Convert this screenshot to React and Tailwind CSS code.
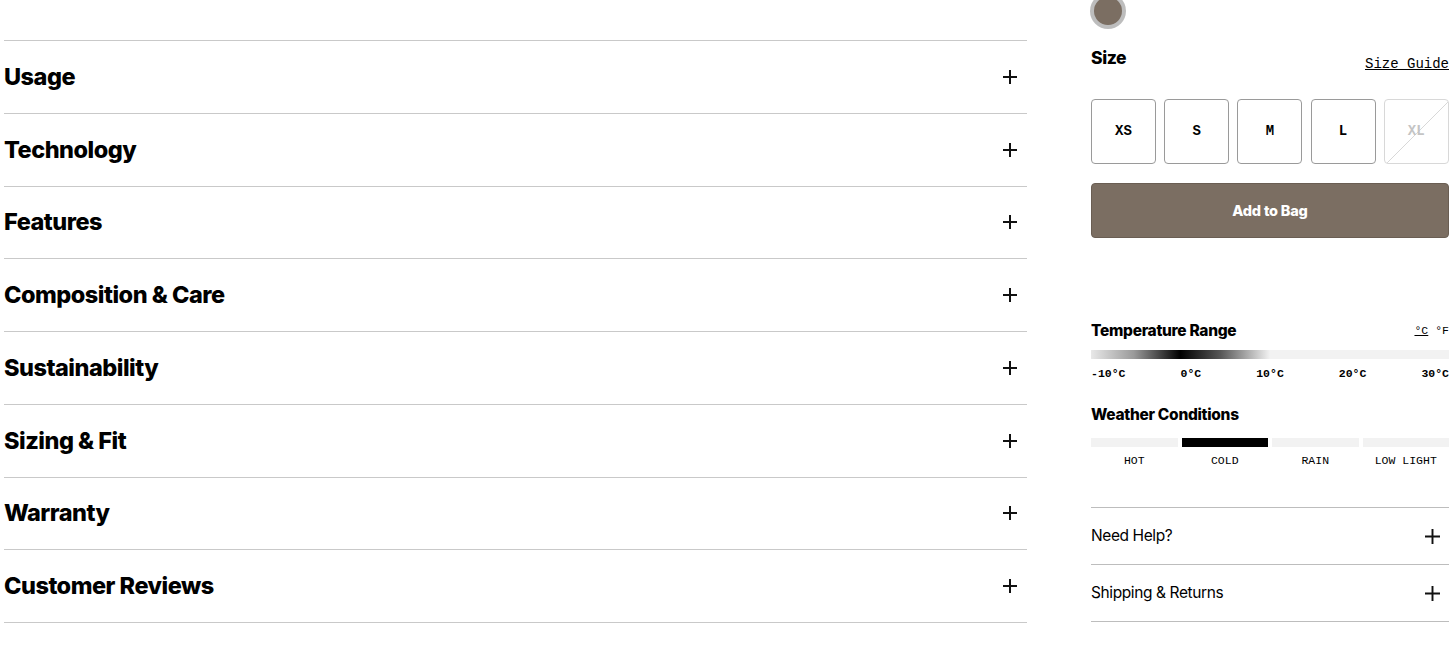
import React from "react";

const Plus = ({ size = 14, sw = 2 }) => (
  <svg width={size} height={size} viewBox="0 0 14 14" fill="none" stroke="#111" strokeWidth={sw}>
    <path d="M7 0v14M0 7h14" />
  </svg>
);

const rows = [
  "Usage",
  "Technology",
  "Features",
  "Composition & Care",
  "Sustainability",
  "Sizing & Fit",
  "Warranty",
  "Customer Reviews",
];

const head = { fontFamily: "Inter, 'Liberation Sans', sans-serif" };
const mono = { fontFamily: "'Liberation Mono', 'Courier New', monospace" };

export default function App() {
  return (
    <div className="w-[1456px] h-[661px] overflow-hidden bg-white flex text-black" style={head}>
      <div className="w-[1023px] ml-[4px] pt-[40px]">
        <div className="border-t border-[#c9c9c9]">
          {rows.map((r) => (
            <div key={r} className="h-[72.75px] border-b border-[#c9c9c9] flex items-center justify-between pr-[10px]">
              <span className="text-[23.5px] font-extrabold tracking-[-0.5px] -mt-[1px]">{r}</span>
              <Plus />
            </div>
          ))}
        </div>
      </div>
      <div className="w-[358px] ml-[64px] flex flex-col">
        <div className="-mt-[7px] ml-[-1px] w-[36px] h-[36px] rounded-full bg-[#bdbdbd] flex items-center justify-center">
          <div className="w-[28px] h-[28px] rounded-full bg-[#7b6e62]" />
        </div>
        <div className="mt-[18px] flex justify-between items-end h-[22px]">
          <span className="text-[17.5px] font-extrabold tracking-[-0.4px] leading-[22px]">Size</span>
          <span className="text-[14px] underline leading-[14px] -mb-[2px]" style={mono}>Size Guide</span>
        </div>
        <div className="mt-[30px] flex gap-[8.2px]">
          {["XS", "S", "M", "L"].map((s) => (
            <div key={s} className="w-[65px] h-[65px] border border-[#9a9a9a] rounded-[4px] flex items-center justify-center text-[14px] font-bold" style={mono}>
              {s}
            </div>
          ))}
          <div className="relative w-[65px] h-[65px] border border-[#d8d8d8] rounded-[4px] flex items-center justify-center text-[14px] font-bold text-[#c4c4c4] overflow-hidden" style={mono}>
            <svg className="absolute inset-0" width="65" height="65" viewBox="0 0 65 65">
              <line x1="0" y1="65" x2="65" y2="0" stroke="#d8d8d8" strokeWidth="1" />
            </svg>
            <span className="relative">XL</span>
          </div>
        </div>
        <button className="mt-[19px] h-[55px] w-full rounded-[4px] bg-[#7b6e62] border border-[#6a5e53] text-white text-[14.5px] font-extrabold tracking-[-0.2px]">
          Add to Bag
        </button>
        <div className="mt-[84px] flex justify-between items-center h-[18px]">
          <span className="text-[15.5px] font-extrabold tracking-[-0.3px]">Temperature Range</span>
          <span className="text-[11.5px]" style={mono}>
            <span className="underline">°C</span> °F
          </span>
        </div>
        <div
          className="mt-[10px] h-[9px] w-full"
          style={{
            background:
              "linear-gradient(to right, #e8e8e8 0%, #9a9a9a 12%, #000 25%, #555 36%, #f2f2f2 50%, #f2f2f2 100%)",
          }}
        />
        <div className="mt-[8px] flex justify-between text-[11.5px] font-bold leading-[14px]" style={mono}>
          <span>-10°C</span>
          <span>0°C</span>
          <span>10°C</span>
          <span>20°C</span>
          <span>30°C</span>
        </div>
        <div className="mt-[25px] text-[15.5px] font-extrabold tracking-[-0.3px] h-[18px] leading-[18px]">Weather Conditions</div>
        <div className="mt-[14px] grid grid-cols-4 gap-[4px]">
          {[false, true, false, false].map((a, i) => (
            <div key={i} className={a ? "h-[9px] bg-black" : "h-[9px] bg-[#f2f2f2]"} />
          ))}
        </div>
        <div className="mt-[7px] grid grid-cols-4 gap-[4px] text-[11.5px] text-center leading-[14px]" style={mono}>
          <span>HOT</span>
          <span>COLD</span>
          <span>RAIN</span>
          <span>LOW LIGHT</span>
        </div>
        <div className="mt-[39px] border-t border-[#bdbdbd]">
          {["Need Help?", "Shipping & Returns"].map((t) => (
            <div key={t} className="h-[57px] border-b border-[#bdbdbd] flex items-center justify-between pr-[9px]">
              <span className="text-[15.5px] tracking-[-0.4px]">{t}</span>
              <Plus size={15} sw={1.8} />
            </div>
          ))}
        </div>
      </div>
    </div>
  );
}
